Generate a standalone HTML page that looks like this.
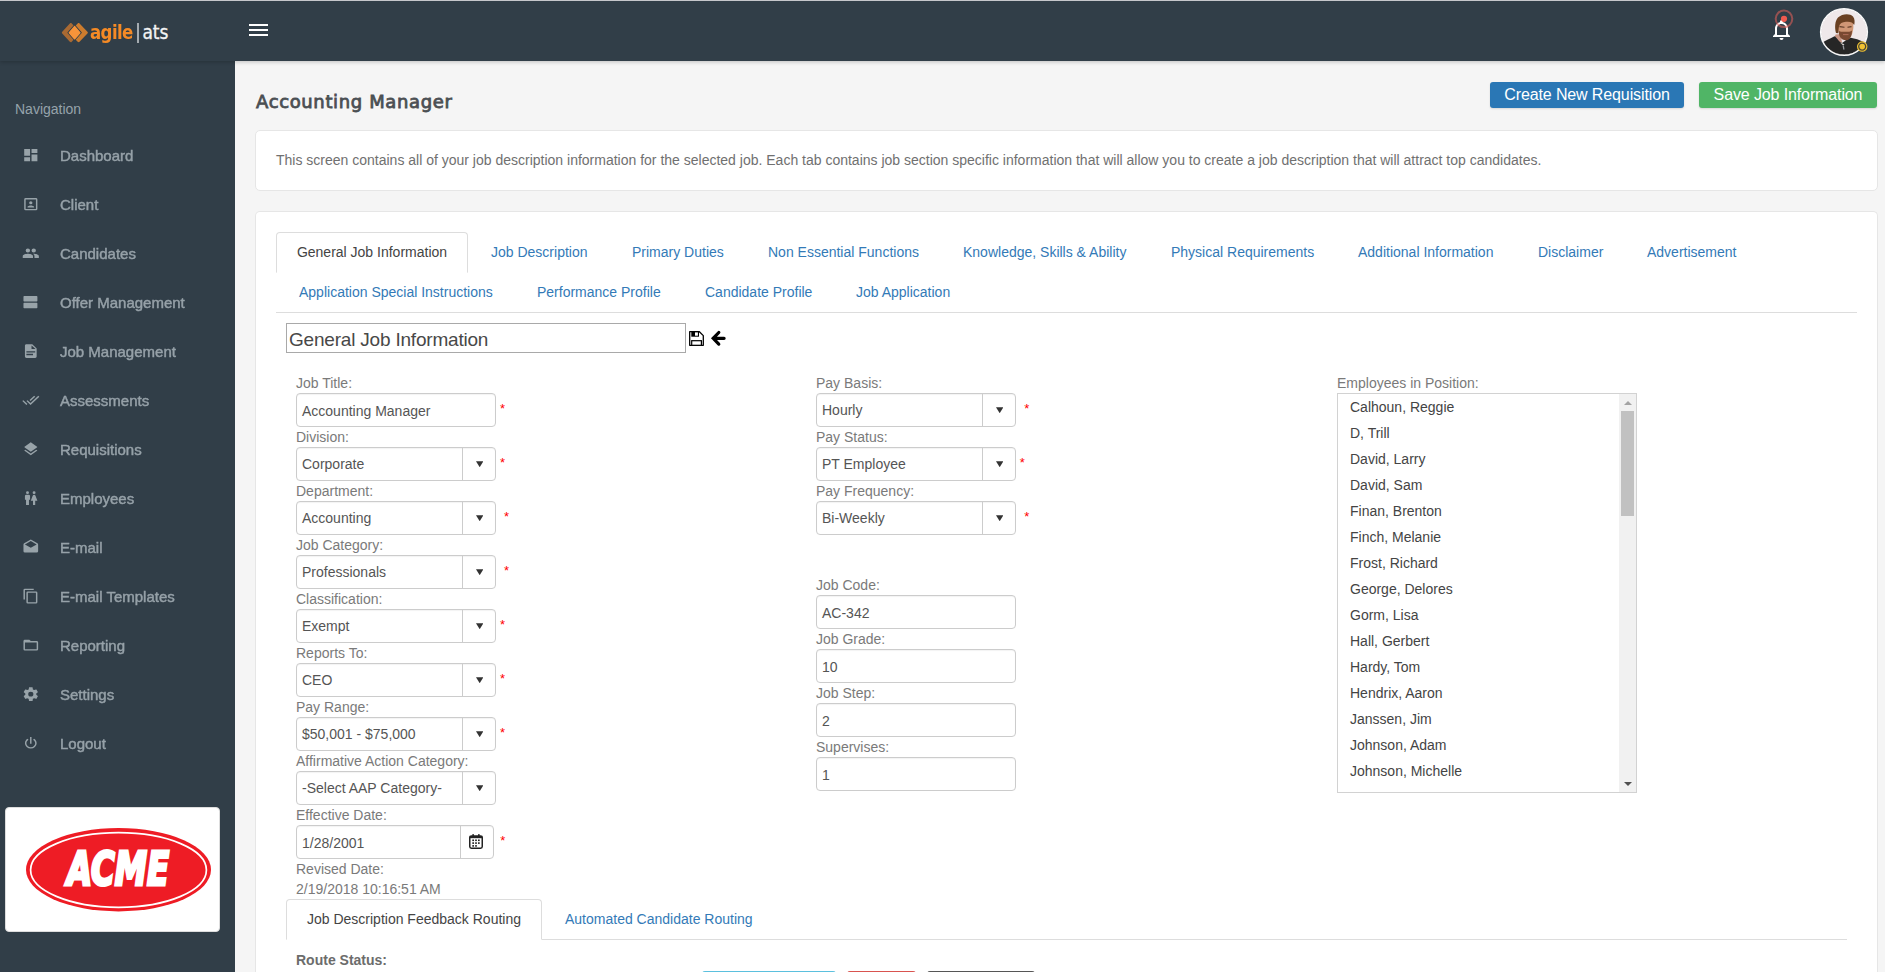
<!DOCTYPE html>
<html lang="en">
<head>
<meta charset="utf-8">
<title>Accounting Manager - agile ats</title>
<style>
*{box-sizing:border-box;margin:0;padding:0}
html,body{width:1885px;height:972px;overflow:hidden;background:#f5f5f5;font-family:"Liberation Sans",Arial,sans-serif;color:#555}
body{position:relative}
.abs{position:absolute}
svg{display:block}
/* top */
#topline{position:absolute;left:0;top:0;width:1885px;height:1px;background:#c6c7cb;z-index:30}
#topbar{position:absolute;left:0;top:1px;width:1885px;height:60px;background:#313e48;z-index:20;box-shadow:0 1px 4px rgba(0,0,0,.22)}
#sidebar{position:absolute;left:0;top:61px;width:235px;height:911px;background:#313e48;z-index:10}
#logo{position:absolute;left:61px;top:21px;height:24px;white-space:nowrap}
#logo .a{position:absolute;left:29px;top:-4px;font:bold 19px/28px "DejaVu Sans Condensed","DejaVu Sans",sans-serif;color:#f58a25;letter-spacing:-.6px;transform:scaleX(.97);transform-origin:0 50%}
#logo .bar{position:absolute;left:76.300px;top:1.200px;width:2px;height:19.800px;background:#a4abb0}
#logo .t{position:absolute;left:81.5px;top:-4px;font:19px/28px "DejaVu Sans Condensed","DejaVu Sans",sans-serif;color:#f4f4f4;letter-spacing:-.1px;-webkit-text-stroke:.3px #f4f4f4}
#burger{position:absolute;left:249px;top:22px;width:19px;height:13px}
#burger i{position:absolute;left:0;width:19px;height:2px;background:#fff}
/* nav */
.navhead{position:absolute;left:15px;top:40px;font-size:14px;line-height:16px;color:#96a3ab}
.nav{position:absolute;left:0;top:70px;width:235px;list-style:none}
.nav li{position:relative;height:49px;line-height:49px;font-size:15px;color:#96a3ab;padding-left:60px;-webkit-text-stroke:.45px #96a1a8;color:#96a1a8;will-change:transform}
.nav li svg{position:absolute;left:22.200px;top:15.850px;width:17.600px;height:16.300px;fill:#98a3a9}
#acme{position:absolute;left:5px;top:746px;width:215px;height:125px;background:#fff;border-radius:4px;border:1px solid #ddd}

/* main */
#main{position:absolute;left:235px;top:61px;width:1650px;height:911px;overflow:hidden}
#main h4{position:absolute;left:21px;top:28.500px;font:normal 18px/24px "DejaVu Sans","Liberation Sans",sans-serif;color:#4b4f53;-webkit-text-stroke:.8px #4b4f53;letter-spacing:.63px;white-space:nowrap}
.btn{position:absolute;top:21px;height:26px;border-radius:3px;color:#fff;font:16px/25px "Liberation Sans",sans-serif;letter-spacing:-.12px;text-align:center;white-space:nowrap;box-shadow:0 1px 2px rgba(0,0,0,.12)}
.card{position:absolute;left:20px;width:1623px;background:#fff;border:1px solid #e6e6e6;border-radius:5px}
#info{top:69px;height:61px}
#info p{position:absolute;left:20px;top:21.300px;font-size:14px;line-height:16px;color:#707070;white-space:nowrap}
#job{top:150px;height:800px;border-bottom:0;border-radius:5px 5px 0 0}
.tabs{position:absolute;left:20px;top:20px;width:1581px;height:81px;border-bottom:1px solid #ddd;list-style:none}
.tabs li{position:absolute;height:40px;line-height:41px;font-size:14px;color:#337ab7;white-space:nowrap}
.tabs li.on{line-height:39px;color:#444;border:1px solid #ddd;border-bottom-color:#fff;border-radius:4px 4px 0 0;height:41px;background:#fff;text-align:center}

/* form */
#secname{position:absolute;left:30px;top:111px;width:400px;height:30px;border:1px solid #a9a9a9;background:#fff;font:19px/32px "Liberation Sans",sans-serif;color:#484848;padding-left:2px;letter-spacing:-.2px;white-space:nowrap}
.lbl{position:absolute;font-size:14px;line-height:20px;color:#7a7a7a;white-space:nowrap}
.fld{position:absolute;width:200px;height:34px;border:1px solid #ccc;border-radius:4px;background:#fff;font-size:14px;line-height:33px;color:#555;padding-left:5px;white-space:nowrap;box-shadow:inset 0 1px 1px rgba(0,0,0,.05)}
.fld.sel:before{content:"";position:absolute;left:165px;top:0;width:1px;height:32px;background:#ccc}
.fld.sel:after{content:"";position:absolute;left:179px;top:13.200px;width:7.400px;height:6px;background:#333;clip-path:polygon(0 0,100% 0,50% 100%)}
.fld.date{width:198px;line-height:35px}
.fld.txt{line-height:35px}
.fld.date:before{content:"";position:absolute;left:163px;top:0;width:1px;height:32px;background:#ccc}
.req{position:absolute;color:#f00;font-size:13px;line-height:16px;margin-left:-2px;margin-top:-1px}

#emp{position:absolute;left:1081px;top:181px;width:300px;height:400px;border:1px solid #d2d2d2;background:#fff;overflow:hidden}
#emp ul{list-style:none;position:absolute;left:0;top:0;width:282px}
#emp li{height:26px;line-height:26px;padding-left:12px;font-size:14px;color:#444;white-space:nowrap}
#emp .sb{position:absolute;right:0;top:0;width:17px;height:398px;background:#f1f1f1}
#emp .sb b{position:absolute;left:2px;top:17px;width:13px;height:105px;background:#c1c1c1}
#emp .sb i{position:absolute;left:4.500px;border:4px solid transparent}
.tabs2{position:absolute;left:30px;top:687px;width:1561px;height:41px;border-bottom:1px solid #ddd;list-style:none}
.tabs2 li{position:absolute;top:0;height:40px;line-height:41px;font-size:14px;color:#337ab7;white-space:nowrap}
.tabs2 li.on{color:#444;border:1px solid #ddd;border-bottom-color:#fff;border-radius:4px 4px 0 0;height:41px;line-height:39px;background:#fff;text-align:center}
#route{position:absolute;left:40px;top:738px;font-weight:bold;font-size:14px;line-height:20px;color:#6c6c6c;white-space:nowrap}
.b2{position:absolute;top:759px;height:30px;border-radius:3px 3px 0 0;color:#fff;font-size:14px;line-height:30px;text-align:center;overflow:hidden;white-space:nowrap}
</style>
</head>
<body>
<div id="topline"></div>
<div id="topbar">
  <div id="logo">
    <svg class="abs" style="left:0;top:1px" width="28" height="20" viewBox="0 0 28 20">
      <path d="M9.8 1.30L17.40 9.6L9.8 17.90L2.20 9.6Z" fill="#a96a33" stroke="#a96a33" stroke-width="2.6" stroke-linejoin="round"/>
      <path d="M17.6 1.30L25.50 9.6L17.6 17.90L9.70 9.6Z" fill="#cc7c2e" stroke="#cc7c2e" stroke-width="2.6" stroke-linejoin="round"/>
      <path d="M13.6 2.20L20.20 9.7L13.6 17.20L7.00 9.7Z" fill="#313e48" stroke="#313e48" stroke-width="1.2" stroke-linejoin="round"/>
      <path d="M13.6 3.70L18.80 9.7L13.6 15.70L8.40 9.7Z" fill="#f8943a" stroke="#f8943a" stroke-width="1.6" stroke-linejoin="round"/>
    </svg>
    <span class="a">agile</span><span class="bar"></span><span class="t">ats</span>
  </div>
  <div id="burger"><i style="top:1px"></i><i style="top:6px"></i><i style="top:11px"></i></div>
  <svg class="abs" style="left:1769.5px;top:16.6px" width="24" height="24" viewBox="0 0 24 24"><path fill="#fff" d="M16,17H7V10.5C7,8 9,6 11.5,6C14,6 16,8 16,10.5M18,16V10.5C18,7.43 15.86,4.860 13,4.180V3.500A1.500,1.500 0 0,0 11.5,2A1.500,1.500 0 0,0 10,3.500V4.180C7.130,4.860 5,7.430 5,10.500V16L3,18V19H20V18M11.5,22A2,2 0 0,0 13.5,20H9.500A2,2 0 0,0 11.5,22Z"/></svg>
  <svg class="abs" style="left:1773px;top:7px" width="22" height="22" viewBox="0 0 22 22"><circle cx="11" cy="10.8" r="8.3" fill="none" stroke="#e8605a" stroke-opacity=".55" stroke-width="2"/><circle cx="11" cy="10.8" r="3.1" fill="#ee5a4f"/></svg>
  <svg class="abs" style="left:1819px;top:6px" width="52" height="52" viewBox="0 0 52 52">
    <defs><filter id="bl"><feGaussianBlur stdDeviation=".45"/></filter><clipPath id="av"><circle cx="25" cy="25" r="22.6"/></clipPath></defs>
    <circle cx="25" cy="25" r="24.1" fill="#fff"/>
    <g clip-path="url(#av)" filter="url(#bl)">
      <rect x="0" y="0" width="52" height="52" fill="#efe8ea"/>
      <path d="M16.500 27.500L22 27L23 36L15 33Z" fill="#c99583"/>
      <path d="M2 36.500C7 33.500 11 31.500 15.500 29.300C18 30.500 20 35.500 23 36C26 34 29 31.500 31.800 30.800C36 31.500 40 32.800 46 35.500V52H2Z" fill="#252828"/>
      <path d="M18.700 16C19 13 33.500 12.500 34.200 16.500C34.800 21 34 26 32 29L21 29C19 25 18.500 20 18.700 16Z" fill="#cf9674"/>
      <path d="M20.500 19.600L25.500 20.200M28.500 20.200L32.500 19.600" stroke="#5a3826" stroke-width="1.100" fill="none"/>
      <path d="M19.600 23.500C21.500 25.500 23.500 24.600 26.500 24.800C29.500 24.600 31.500 25 33 23.500C33 28 31.800 31.500 29 33C26 34 22.500 32.500 21 30C20 28 19.700 25.500 19.600 23.500Z" fill="#7a4a30"/>
      <path d="M24 27.600H29.500" stroke="#b06c5a" stroke-width="1"/>
      <path d="M17 26C15.600 21 15.800 14 19 10.500C23 6.500 31 6 34 9.500C36 12 35.800 15.500 35.200 18C34 15.500 31 14.300 27 14.800C23 15 20.800 16.500 20 19.500C19.500 22 19.500 24 19.200 26.200Z" fill="#6b4123"/>
      <path d="M21.200 35.800L25.500 37.200L24 38.200Z" fill="#e6e1de"/>
      <path d="M24.300 39L24.800 42" stroke="#9a9aa0" stroke-width="1.300" stroke-linecap="round"/>
    </g>
    <circle cx="25" cy="25" r="22.900" fill="none" stroke="#d9d5d6" stroke-width=".5" stroke-dasharray="2.500 1.500"/>
    <circle cx="43.200" cy="39.600" r="4.700" fill="#4a4636" stroke="#f1c232" stroke-width="1.100"/>
    <circle cx="43.200" cy="39.600" r="2.800" fill="#f1c232"/>
  </svg>
</div>
<div id="sidebar">
  <div class="navhead">Navigation</div>
  <ul class="nav">
    <li><svg viewBox="0 0 24 24" preserveAspectRatio="none"><path d="M13,3V9H21V3M13,21H21V11H13M3,21H11V15H3M3,13H11V3H3V13Z"/></svg>Dashboard</li>
    <li><svg viewBox="0 0 24 24" preserveAspectRatio="none"><path d="M19,19H5V5H19M19,3H5A2,2 0 0,0 3,5V19A2,2 0 0,0 5,21H19A2,2 0 0,0 21,19V5C21,3.89 20.1,3 19,3M16.5,16.25C16.5,14.75 13.5,14 12,14C10.5,14 7.5,14.75 7.5,16.25V17H16.5M12,12.25A2.25,2.25 0 0,0 14.25,10A2.25,2.25 0 0,0 12,7.75A2.25,2.25 0 0,0 9.75,10A2.25,2.25 0 0,0 12,12.25Z"/></svg>Client</li>
    <li><svg viewBox="0 0 24 24" preserveAspectRatio="none"><path d="M16,13C15.71,13 15.38,13 15.03,13.05C16.19,13.89 17,15 17,16.5V19H23V16.5C23,14.17 18.33,13 16,13M8,13C5.67,13 1,14.17 1,16.5V19H15V16.5C15,14.17 10.33,13 8,13M8,11A3,3 0 0,0 11,8A3,3 0 0,0 8,5A3,3 0 0,0 5,8A3,3 0 0,0 8,11M16,11A3,3 0 0,0 19,8A3,3 0 0,0 16,5A3,3 0 0,0 13,8A3,3 0 0,0 16,11Z"/></svg>Candidates</li>
    <li><svg viewBox="0 0 24 24" preserveAspectRatio="none"><path d="M20,3H3A1,1 0 0,0 2,4V10A1,1 0 0,0 3,11H20A1,1 0 0,0 21,10V4A1,1 0 0,0 20,3M20,13H3A1,1 0 0,0 2,14V20A1,1 0 0,0 3,21H20A1,1 0 0,0 21,20V14A1,1 0 0,0 20,13Z"/></svg>Offer Management</li>
    <li><svg viewBox="0 0 24 24" preserveAspectRatio="none"><path d="M13,9H18.5L13,3.5V9M6,2H14L20,8V20A2,2 0 0,1 18,22H6C4.89,22 4,21.1 4,20V4C4,2.89 4.89,2 6,2M15,18V16H6V18H15M18,14V12H6V14H18Z"/></svg>Job Management</li>
    <li><svg viewBox="0 0 24 24" preserveAspectRatio="none"><path d="M0.41,13.41L6,19L7.41,17.58L1.83,12M22.24,5.58L11.66,16.17L7.5,12L6.07,13.41L11.66,19L23.66,7M18,7L16.59,5.58L10.24,11.93L11.66,13.34L18,7Z"/></svg>Assessments</li>
    <li><svg viewBox="0 0 24 24" preserveAspectRatio="none"><path d="M12,16L19.36,10.27L21,9L12,2L3,9L4.63,10.27M12,18.54L4.62,12.81L3,14.07L12,21.07L21,14.07L19.37,12.8L12,18.54Z"/></svg>Requisitions</li>
    <li><svg viewBox="0 0 24 24" preserveAspectRatio="none"><path d="M7.5,2A2,2 0 0,1 9.5,4A2,2 0 0,1 7.5,6A2,2 0 0,1 5.5,4A2,2 0 0,1 7.5,2M6,7H9A2,2 0 0,1 11,9V14.5H9.5V22H5.5V14.5H4V9A2,2 0 0,1 6,7M16.5,2A2,2 0 0,1 18.5,4A2,2 0 0,1 16.5,6A2,2 0 0,1 14.5,4A2,2 0 0,1 16.5,2M15,22V16H12L14.59,8.41C14.84,7.59 15.6,7 16.5,7C17.4,7 18.16,7.59 18.41,8.41L21,16H18V22H15Z"/></svg>Employees</li>
    <li><svg viewBox="0 0 24 24" preserveAspectRatio="none"><path d="M4,8L12,13L20,8V8L12,3L4,8V8M22,8V18A2,2 0 0,1 20,20H4A2,2 0 0,1 2,18V8C2,7.27 2.39,6.64 2.97,6.29L12,0.64L21.03,6.29C21.61,6.64 22,7.27 22,8Z"/></svg>E-mail</li>
    <li><svg viewBox="0 0 24 24" preserveAspectRatio="none"><path d="M19,21H8V7H19M19,5H8A2,2 0 0,0 6,7V21A2,2 0 0,0 8,23H19A2,2 0 0,0 21,21V7A2,2 0 0,0 19,5M16,1H4A2,2 0 0,0 2,3V17H4V3H16V1Z"/></svg>E-mail Templates</li>
    <li><svg viewBox="0 0 24 24" preserveAspectRatio="none"><path d="M20,18H4V8H20M20,6H12L10,4H4C2.89,4 2,4.89 2,6V18A2,2 0 0,0 4,20H20A2,2 0 0,0 22,18V8C22,6.89 21.1,6 20,6Z"/></svg>Reporting</li>
    <li><svg viewBox="0 0 24 24" preserveAspectRatio="none"><path d="M12,15.5A3.5,3.5 0 0,1 8.5,12A3.5,3.5 0 0,1 12,8.5A3.5,3.5 0 0,1 15.5,12A3.5,3.5 0 0,1 12,15.5M19.43,12.97C19.47,12.65 19.5,12.33 19.5,12C19.5,11.67 19.47,11.34 19.43,11L21.54,9.37C21.73,9.22 21.78,8.95 21.66,8.73L19.66,5.27C19.54,5.05 19.27,4.96 19.05,5.05L16.56,6.05C16.04,5.66 15.5,5.32 14.87,5.07L14.5,2.42C14.46,2.18 14.25,2 14,2H10C9.75,2 9.54,2.18 9.5,2.42L9.13,5.07C8.5,5.32 7.96,5.66 7.44,6.05L4.95,5.05C4.73,4.96 4.46,5.05 4.34,5.27L2.34,8.73C2.21,8.95 2.27,9.22 2.46,9.37L4.57,11C4.53,11.34 4.5,11.67 4.5,12C4.5,12.33 4.53,12.65 4.57,12.97L2.46,14.63C2.27,14.78 2.21,15.05 2.34,15.27L4.34,18.73C4.46,18.95 4.73,19.03 4.95,18.95L7.44,17.94C7.96,18.34 8.5,18.68 9.13,18.93L9.5,21.58C9.54,21.82 9.75,22 10,22H14C14.25,22 14.46,21.82 14.5,21.58L14.87,18.93C15.5,18.67 16.04,18.34 16.56,17.94L19.05,18.95C19.27,19.03 19.54,18.95 19.66,18.73L21.66,15.27C21.78,15.05 21.73,14.78 21.54,14.63L19.43,12.97Z"/></svg>Settings</li>
    <li><svg viewBox="0 0 24 24" preserveAspectRatio="none"><path d="M16.56,5.44L15.11,6.89C16.84,7.94 18,9.83 18,12A6,6 0 0,1 12,18A6,6 0 0,1 6,12C6,9.83 7.16,7.94 8.88,6.88L7.44,5.44C5.36,6.88 4,9.28 4,12A8,8 0 0,0 12,20A8,8 0 0,0 20,12C20,9.28 18.64,6.88 16.56,5.44M13,3H11V13H13"/></svg>Logout</li>
  </ul>
  <div id="acme">
    <svg class="abs" style="left:0;top:0" width="213" height="123" viewBox="0 0 213 123">
      <ellipse cx="112.500" cy="61.700" rx="92.500" ry="41.700" fill="#ee1c25"/>
      <ellipse cx="112.500" cy="62" rx="87.900" ry="37.300" fill="none" stroke="#fff" stroke-width="1.700"/>
      <text x="61" y="77.200" font-family="'DejaVu Sans Condensed','DejaVu Sans',sans-serif" font-weight="bold" font-style="oblique" font-size="47" fill="#fff" stroke="#fff" stroke-width="3" stroke-linejoin="miter" textLength="102" lengthAdjust="spacingAndGlyphs">ACME</text>
    </svg>
  </div>
</div>
<div id="main">
  <h4>Accounting Manager</h4>
  <div class="btn" style="left:1255px;width:194px;background:#2a77b5">Create New Requisition</div>
  <div class="btn" style="left:1464px;width:178px;background:#50b566">Save Job Information</div>
  <div class="card" id="info"><p>This screen contains all of your job description information for the selected job. Each tab contains job section specific information that will allow you to create a job description that will attract top candidates.</p></div>
  <div class="card" id="job">
    <ul class="tabs">
      <li class="on" style="left:0;top:0;width:192px">General Job Information</li>
      <li style="left:215px;top:0">Job Description</li>
      <li style="left:356px;top:0">Primary Duties</li>
      <li style="left:492px;top:0">Non Essential Functions</li>
      <li style="left:687px;top:0">Knowledge, Skills &amp; Ability</li>
      <li style="left:895px;top:0">Physical Requirements</li>
      <li style="left:1082px;top:0">Additional Information</li>
      <li style="left:1262px;top:0">Disclaimer</li>
      <li style="left:1371px;top:0">Advertisement</li>
      <li style="left:23px;top:40px">Application Special Instructions</li>
      <li style="left:261px;top:40px">Performance Profile</li>
      <li style="left:429px;top:40px">Candidate Profile</li>
      <li style="left:580px;top:40px">Job Application</li>
    </ul>
    <div id="secname">General Job Information</div>
    <svg class="abs" style="left:433px;top:119px" width="15" height="15" viewBox="0 0 15 15"><path d="M.7.7H10.4L14.3 4.6V14.3H.7Z" fill="#fff" stroke="#000" stroke-width="1.3" stroke-linejoin="round"/><rect x="2.3" y=".7" width="7.7" height="5" fill="#000"/><rect x="6" y="1.4" width="2.9" height="3.3" fill="#fff"/><rect x="2.7" y="9.7" width="9.7" height="4.6" fill="#fff" stroke="#000" stroke-width="1.2"/></svg>
    <svg class="abs" style="left:454px;top:118px" width="17" height="17" viewBox="0 0 17 17"><path d="M14.100 8.300H5M8.800 2.500L3.200 8.300L8.800 14.100" fill="none" stroke="#000" stroke-width="3.200" stroke-linecap="round" stroke-linejoin="miter"/></svg>
    <div class="lbl" style="left:40px;top:161px">Job Title:</div>
    <div class="fld txt" style="left:40px;top:181px">Accounting Manager</div>
    <span class="req" style="left:246px;top:190px">*</span>
    <div class="lbl" style="left:40px;top:215px">Division:</div>
    <div class="fld sel" style="left:40px;top:235px">Corporate</div>
    <span class="req" style="left:246px;top:244px">*</span>
    <div class="lbl" style="left:40px;top:269px">Department:</div>
    <div class="fld sel" style="left:40px;top:289px">Accounting</div>
    <span class="req" style="left:250px;top:298px">*</span>
    <div class="lbl" style="left:40px;top:323px">Job Category:</div>
    <div class="fld sel" style="left:40px;top:343px">Professionals</div>
    <span class="req" style="left:250px;top:352px">*</span>
    <div class="lbl" style="left:40px;top:377px">Classification:</div>
    <div class="fld sel" style="left:40px;top:397px">Exempt</div>
    <span class="req" style="left:246px;top:406px">*</span>
    <div class="lbl" style="left:40px;top:431px">Reports To:</div>
    <div class="fld sel" style="left:40px;top:451px">CEO</div>
    <span class="req" style="left:246px;top:460px">*</span>
    <div class="lbl" style="left:40px;top:485px">Pay Range:</div>
    <div class="fld sel" style="left:40px;top:505px">$50,001 - $75,000</div>
    <span class="req" style="left:246px;top:514px">*</span>
    <div class="lbl" style="left:40px;top:539px">Affirmative Action Category:</div>
    <div class="fld sel" style="left:40px;top:559px">-Select AAP Category-</div>
    <div class="lbl" style="left:40px;top:593px">Effective Date:</div>
    <div class="fld date" style="left:40px;top:613px">1/28/2001</div>
    <span class="req" style="left:246.2px;top:622px">*</span>
    <div class="lbl" style="left:40px;top:647px">Revised Date:</div>
    <div class="lbl" style="left:40px;top:667px">2/19/2018 10:16:51 AM</div>
    <svg class="abs" style="left:213px;top:622px" width="14" height="15" viewBox="0 0 14 15"><rect x=".75" y="2" width="12.5" height="12.2" rx="1.6" fill="#fff" stroke="#222" stroke-width="1.5"/><rect x=".75" y="2" width="12.5" height="2.2" fill="#222"/><rect x="3.4" y="0" width="1.5" height="2.6" rx=".6" fill="#222"/><rect x="9.1" y="0" width="1.5" height="2.6" rx=".6" fill="#222"/><g fill="#222"><rect x="3.3" y="5.5" width="1.7" height="1.6"/><rect x="6.15" y="5.5" width="1.7" height="1.6"/><rect x="9" y="5.5" width="1.7" height="1.6"/><rect x="3.3" y="8.3" width="1.7" height="1.6"/><rect x="6.15" y="8.3" width="1.7" height="1.6"/><rect x="9" y="8.3" width="1.7" height="1.6"/><rect x="3.3" y="11.1" width="1.7" height="1.6"/><rect x="6.15" y="11.1" width="1.7" height="1.6"/></g></svg>
    <div class="lbl" style="left:560px;top:161px">Pay Basis:</div>
    <div class="fld sel" style="left:560px;top:181px">Hourly</div>
    <span class="req" style="left:770.3px;top:190px">*</span>
    <div class="lbl" style="left:560px;top:215px">Pay Status:</div>
    <div class="fld sel" style="left:560px;top:235px">PT Employee</div>
    <span class="req" style="left:765.8px;top:244px">*</span>
    <div class="lbl" style="left:560px;top:269px">Pay Frequency:</div>
    <div class="fld sel" style="left:560px;top:289px">Bi-Weekly</div>
    <span class="req" style="left:770.3px;top:298px">*</span>
    <div class="lbl" style="left:560px;top:363px">Job Code:</div>
    <div class="fld txt" style="left:560px;top:383px">AC-342</div>
    <div class="lbl" style="left:560px;top:417px">Job Grade:</div>
    <div class="fld txt" style="left:560px;top:437px">10</div>
    <div class="lbl" style="left:560px;top:471px">Job Step:</div>
    <div class="fld txt" style="left:560px;top:491px">2</div>
    <div class="lbl" style="left:560px;top:525px">Supervises:</div>
    <div class="fld txt" style="left:560px;top:545px">1</div>
    <div class="lbl" style="left:1081px;top:161px">Employees in Position:</div>
    <div id="emp"><ul><li>Calhoun, Reggie</li><li>D, Trill</li><li>David, Larry</li><li>David, Sam</li><li>Finan, Brenton</li><li>Finch, Melanie</li><li>Frost, Richard</li><li>George, Delores</li><li>Gorm, Lisa</li><li>Hall, Gerbert</li><li>Hardy, Tom</li><li>Hendrix, Aaron</li><li>Janssen, Jim</li><li>Johnson, Adam</li><li>Johnson, Michelle</li></ul><div class="sb"><i style="top:6.500px;border-bottom:4.500px solid #a3a3a3;border-top:0"></i><b></b><i style="bottom:6.500px;border-top:4.500px solid #505050;border-bottom:0"></i></div></div>
    <ul class="tabs2">
      <li class="on" style="left:0;width:256px">Job Description Feedback Routing</li>
      <li style="left:279px">Automated Candidate Routing</li>
    </ul>
    <div id="route">Route Status:</div>
    <div class="b2" style="left:446px;width:134px;background:#5bc0de">Add Reviewer</div>
    <div class="b2" style="left:591px;width:69px;background:#d9534f">Clear</div>
    <div class="b2" style="left:671px;width:108px;background:#565656">Send Route</div>
  </div>
</div>

</body>
</html>
